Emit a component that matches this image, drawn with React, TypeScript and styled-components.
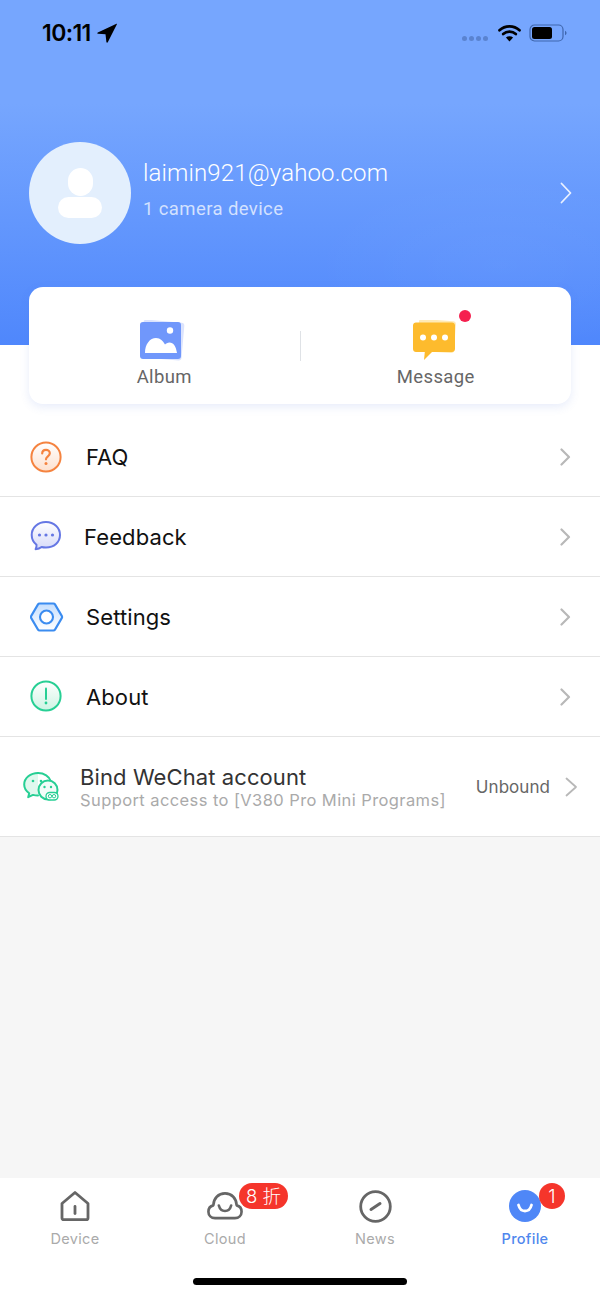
import React from 'react';
import styled, { createGlobalStyle } from 'styled-components';

const GlobalStyle = createGlobalStyle`
  html, body {
    margin: 0;
    padding: 0;
    background: #fff;
  }
  body {
    font-family: 'Inter', 'Liberation Sans', 'Noto Sans CJK SC', sans-serif;
  }
  * {
    box-sizing: border-box;
  }
`;

const Page = styled.div`
  width: 600px;
  height: 1299px;
  display: flex;
  flex-direction: column;
  overflow: hidden;
  background: #fff;
`;

const Hero = styled.div`
  height: 345px;
  flex-shrink: 0;
  background:
    radial-gradient(ellipse 190px 90px at 500px 265px, rgba(255, 255, 255, 0.035), transparent),
    linear-gradient(180deg, #76a6fe 0%, #76a6fe 30%, #4f87fc 100%);
`;

const StatusBar = styled.div`
  height: 66px;
  display: flex;
  align-items: center;
  padding: 0 33px 0 42px;
  color: #000;
`;

const Time = styled.span`
  font-size: 23px;
  font-weight: 600;
  letter-spacing: -0.6px;
  margin-right: 6px;
`;

const StatusRight = styled.div`
  margin-left: auto;
  display: flex;
  align-items: center;
`;

const SignalDots = styled.div`
  display: flex;
  gap: 2px;
  margin: 11px 10px 0 0;
`;

const SignalDot = styled.span`
  width: 5px;
  height: 5px;
  border-radius: 50%;
  background: #5a83d0;
`;

const Profile = styled.div`
  display: flex;
  align-items: center;
  margin-top: 76px;
  padding: 0 28px 0 29px;
`;

const Avatar = styled.div`
  width: 102px;
  height: 102px;
  border-radius: 50%;
  background: #e3effd;
  display: flex;
  align-items: center;
  justify-content: center;
  flex-shrink: 0;
`;

const ProfileText = styled.div`
  margin-left: 12px;
  flex: 1;
  color: #fff;
  padding-bottom: 8px;
`;

const Email = styled.div`
  font-family: 'Roboto', sans-serif;
  font-size: 24px;
  font-weight: 300;
  line-height: 30px;
  color: #fff;
  letter-spacing: 0.14px;
`;

const DeviceCount = styled.div`
  font-family: 'Roboto', sans-serif;
  font-size: 18.5px;
  line-height: 24px;
  margin-top: 9px;
  color: rgba(255, 255, 255, 0.72);
  letter-spacing: 0.4px;
`;

const QuickCard = styled.div`
  height: 117px;
  flex-shrink: 0;
  margin: -58px 29px 13px;
  background: #fff;
  border-radius: 14px;
  box-shadow: 0 3px 10px rgba(70, 110, 220, 0.13);
  display: flex;
  align-items: center;
  position: relative;
`;

const QuickItem = styled.div`
  flex: 1;
  height: 100%;
  display: flex;
  flex-direction: column;
  align-items: center;
  padding-top: 33px;
`;

const QuickIconWrap = styled.div<{ $nudge: number }>`
  position: relative;
  width: 46px;
  height: 42px;
  margin-left: ${props => props.$nudge}px;
`;

const RedDot = styled.span`
  position: absolute;
  top: -10px;
  right: -12px;
  width: 12px;
  height: 12px;
  border-radius: 50%;
  background: #f5204f;
`;

const QuickLabel = styled.div`
  font-family: 'Roboto', sans-serif;
  font-size: 18.5px;
  line-height: 22px;
  color: #666;
  margin-top: 4px;
  letter-spacing: 0.35px;
`;

const QuickDivider = styled.div`
  width: 1px;
  height: 30px;
  background: #dfe2e6;
  flex-shrink: 0;
`;

const MenuRow = styled.div<{ $tall?: boolean }>`
  height: ${props => (props.$tall ? 100 : 80)}px;
  flex-shrink: 0;
  display: flex;
  align-items: center;
  border-bottom: 1px solid #e4e4e4;
  padding-left: 30px;
`;

const MenuIcon = styled.div`
  width: 56px;
  display: flex;
  align-items: center;
  flex-shrink: 0;
`;

const MenuLabel = styled.div<{ $shift?: number }>`
  flex: 1;
  font-size: 22px;
  color: #111;
  margin-left: ${props => props.$shift || 0}px;
  letter-spacing: 0.1px;
`;

const Chevron = styled.svg`
  margin-right: 29px;
  flex-shrink: 0;
`;

const WeChatIcon = styled.div`
  width: 57px;
  margin-left: -7px;
  flex-shrink: 0;
  display: flex;
  align-items: center;
`;

const WeChatText = styled.div`
  flex: 1;
`;

const WeChatTitle = styled.div`
  font-size: 22px;
  line-height: 26px;
  color: #333;
  letter-spacing: 0.1px;
`;

const WeChatSub = styled.div`
  font-size: 16.5px;
  line-height: 20px;
  color: #aaa;
  letter-spacing: 0.41px;
`;

const BindState = styled.div`
  font-size: 17px;
  color: #666;
  margin-right: 15px;
  letter-spacing: 0.05px;
`;

const WeChatChevron = styled.svg`
  margin-right: 22px;
  flex-shrink: 0;
`;

const Filler = styled.div`
  flex: 1;
  background: #f6f6f6;
`;

const TabBar = styled.div`
  height: 121px;
  flex-shrink: 0;
  background: #fff;
  display: flex;
  flex-direction: column;
`;

const Tabs = styled.div`
  display: grid;
  grid-template-columns: repeat(4, 1fr);
  padding-top: 10px;
`;

const Tab = styled.div`
  display: flex;
  flex-direction: column;
  align-items: center;
`;

const TabIcon = styled.div`
  position: relative;
  width: 36px;
  height: 36px;
  display: flex;
  align-items: center;
  justify-content: center;
`;

const TabLabel = styled.div<{ $active?: boolean }>`
  font-size: 14.5px;
  line-height: 18px;
  margin-top: 6px;
  font-weight: ${props => (props.$active ? 500 : 400)};
  color: ${props => (props.$active ? '#4f87ee' : '#aaa')};
  letter-spacing: 0.3px;
`;

const Badge = styled.span<{ $wide?: boolean }>`
  position: absolute;
  top: -5px;
  left: 32px;
  width: ${props => (props.$wide ? 49 : 26)}px;
  height: 26px;
  border-radius: 13px;
  background: #f5352b;
  color: #fff;
  font-size: 18.5px;
  font-weight: 300;
  line-height: 26px;
  text-align: center;
  font-family: 'Inter', 'Noto Sans CJK SC', sans-serif;
  white-space: nowrap;
`;

const HomeIndicator = styled.div`
  width: 214px;
  height: 7px;
  border-radius: 4px;
  background: #000;
  margin: 30px auto 0;
`;

const RowChevron = () => (
  <Chevron width="11" height="18" viewBox="0 0 11 18" fill="none">
    <path d="M1.500 1.500L9 9L1.500 16.500" stroke="#b8b8b8" strokeWidth="2.200" strokeLinecap="round" strokeLinejoin="round" />
  </Chevron>
);

const menuItems = [
  {
    label: 'FAQ',
    icon: (
      <svg width="33" height="33" viewBox="0 0 33 33" fill="none">
        <defs>
          <linearGradient id="faqFill" x1="0" y1="0" x2="0" y2="1">
            <stop offset="0" stopColor="#fff" />
            <stop offset="1" stopColor="#fde0ce" />
          </linearGradient>
        </defs>
        <circle cx="16" cy="17" r="14.600" fill="url(#faqFill)" stroke="#f5833f" strokeWidth="2" />
        <path d="M12.200 13.500c0-2.300 1.700-3.600 3.800-3.600s3.800 1.400 3.800 3.400c0 3-3.800 3-3.800 6" stroke="#f5833f" strokeWidth="2.200" strokeLinecap="round" />
        <circle cx="16" cy="23.600" r="1.500" fill="#f5833f" />
      </svg>
    ),
  },
  {
    label: 'Feedback',
    shift: -2,
    icon: (
      <svg width="33" height="33" viewBox="0 0 33 33" fill="none">
        <defs>
          <linearGradient id="fbFill" x1="0" y1="0" x2="0" y2="1">
            <stop offset="0" stopColor="#fff" />
            <stop offset="1" stopColor="#d6daf9" />
          </linearGradient>
        </defs>
        <path
          d="M16 2C7.900 2 1.700 7.600 1.700 15c0 4 1.800 7.400 4.800 9.800.2 1.400-.2 3-.9 4.400 2.600-.2 4.500-1 6-2.200 1.300.4 2.800.5 4.400.5 8 0 14-5.300 14-12.500S24 2 16 2z"
          fill="url(#fbFill)"
          stroke="#6577e4"
          strokeWidth="2"
          strokeLinejoin="round"
        />
        <circle cx="9.500" cy="15" r="1.600" fill="#6577e4" />
        <circle cx="16" cy="15" r="1.600" fill="#6577e4" />
        <circle cx="22.500" cy="15" r="1.600" fill="#6577e4" />
      </svg>
    ),
  },
  {
    label: 'Settings',
    icon: (
      <svg width="34" height="30" viewBox="0 0 34 30" fill="none">
        <defs>
          <linearGradient id="setFill" x1="0" y1="0" x2="0" y2="1">
            <stop offset="0" stopColor="#c4defe" />
            <stop offset="1" stopColor="#fff" />
          </linearGradient>
        </defs>
        <path
          d="M9.600 1.500h13.800c.7 0 1.300.4 1.600.9l6.900 11.700c.3.600.3 1.200 0 1.800L25 27.600c-.3.500-.9.900-1.600.9H9.600c-.7 0-1.300-.4-1.600-.9L1.100 15.900c-.3-.6-.3-1.200 0-1.800L8 2.400c.3-.5.900-.9 1.600-.9z"
          fill="url(#setFill)"
          stroke="#3b8cf0"
          strokeWidth="2.100"
        />
        <circle cx="16.500" cy="15" r="6.500" fill="#fff" stroke="#3b8cf0" strokeWidth="2.100" />
      </svg>
    ),
  },
  {
    label: 'About',
    icon: (
      <svg width="33" height="33" viewBox="0 0 33 33" fill="none">
        <defs>
          <linearGradient id="aboutFill" x1="0" y1="0" x2="0" y2="1">
            <stop offset="0" stopColor="#fff" />
            <stop offset="1" stopColor="#cdf4e3" />
          </linearGradient>
        </defs>
        <circle cx="16" cy="16" r="14.600" fill="url(#aboutFill)" stroke="#27cf94" strokeWidth="2" />
        <path d="M16 8.500V19" stroke="#27cf94" strokeWidth="2" strokeLinecap="round" />
        <circle cx="16" cy="23" r="1.400" fill="#27cf94" />
      </svg>
    ),
  },
];

const App: React.FC = () => {
  return (
    <Page>
      <GlobalStyle />
      <Hero>
        <StatusBar>
          <Time>10:11</Time>
          <svg width="20" height="20" viewBox="0 0 20 20">
            <path d="M19.500.8L.8 9.500c-.7.400-.5 1.300.3 1.300l7.400.4.900 7.800c.1.800 1 .9 1.400.2L19.900 1.200c.2-.3-.1-.6-.4-.4z" fill="#000" />
          </svg>
          <StatusRight>
            <SignalDots>
              <SignalDot />
              <SignalDot />
              <SignalDot />
              <SignalDot />
            </SignalDots>
            <svg width="23" height="18" viewBox="0 0 23 18" fill="none">
              <path d="M1.500 6.200C7 1 16 1 21.500 6.200" stroke="#000" strokeWidth="2.700" strokeLinecap="round" />
              <path d="M5.200 10C8.700 6.800 14.300 6.800 17.800 10" stroke="#000" strokeWidth="2.700" strokeLinecap="round" />
              <path d="M11.500 17.500L7.900 13.400c2-1.500 5.200-1.500 7.200 0z" fill="#000" />
            </svg>
            <svg width="38" height="18" viewBox="0 0 38 18" fill="none" style={{ marginLeft: 8 }}>
              <rect x="1" y="1" width="33" height="16" rx="4.500" stroke="#3f66ad" strokeWidth="1.200" />
              <rect x="3" y="3" width="20" height="12" rx="2.500" fill="#000" />
              <path d="M36 6.800c1 .5 1.500 1.300 1.500 2.200s-.5 1.700-1.500 2.200z" fill="#3f66ad" />
            </svg>
          </StatusRight>
        </StatusBar>
        <Profile>
          <Avatar>
            <svg width="46" height="50" viewBox="0 0 46 50">
              <rect x="11" y="0" width="25" height="28" rx="12.500" fill="#fff" />
              <rect x="1" y="29" width="44" height="21" rx="10.500" fill="#fff" />
            </svg>
          </Avatar>
          <ProfileText>
            <Email>laimin921@yahoo.com</Email>
            <DeviceCount>1 camera device</DeviceCount>
          </ProfileText>
          <svg width="12" height="22" viewBox="0 0 12 22" fill="none">
            <path d="M1.500 1.500L10.500 11L1.500 20.500" stroke="#e9f0ff" strokeWidth="1.800" strokeLinecap="round" strokeLinejoin="round" />
          </svg>
        </Profile>
      </Hero>

      <QuickCard>
        <QuickItem>
          <QuickIconWrap $nudge={-4}>
            <svg width="46" height="42" viewBox="0 0 46 42">
              <rect x="3" y="1" width="41" height="38" rx="3" fill="#dbe3fd" transform="rotate(5 23 20)" />
              <rect x="1" y="2" width="41" height="37" rx="3" fill="#7097fb" />
              <circle cx="31" cy="10.500" r="3.200" fill="#fff" />
              <path d="M6 33c0-9 5-15 11-15 4.500 0 7 3 9 6.500 1-1 2.500-2 4.500-2 4 0 6.500 4 7.500 10.500z" fill="#fff" />
            </svg>
          </QuickIconWrap>
          <QuickLabel>Album</QuickLabel>
        </QuickItem>
        <QuickDivider />
        <QuickItem>
          <QuickIconWrap $nudge={0}>
            <svg width="46" height="42" viewBox="0 0 46 42">
              <rect x="5" y="0" width="37" height="32" rx="3" fill="#ffeab5" transform="rotate(4 23 16)" />
              <path d="M3 2.500h36c1.600 0 3 1.300 3 3V29c0 1.700-1.400 3-3 3H19l-8 8 .8-8H3c-1.600 0-3-1.300-3-3V5.500c0-1.700 1.400-3 3-3z" fill="#fdbb2d" />
              <circle cx="10" cy="17.500" r="3" fill="#fff" />
              <circle cx="21" cy="17.500" r="3" fill="#fff" />
              <circle cx="32" cy="17.500" r="3" fill="#fff" />
            </svg>
            <RedDot />
          </QuickIconWrap>
          <QuickLabel>Message</QuickLabel>
        </QuickItem>
      </QuickCard>

      {menuItems.map(item => (
        <MenuRow key={item.label}>
          <MenuIcon>{item.icon}</MenuIcon>
          <MenuLabel $shift={item.shift}>{item.label}</MenuLabel>
          <RowChevron />
        </MenuRow>
      ))}

      <MenuRow $tall>
        <WeChatIcon>
          <svg width="36" height="30" viewBox="0 0 36 30" fill="none">
            <path
              d="M15 1C7.500 1 1.200 6 1.200 12.500c0 3.600 2 6.600 5 8.700l-1 4 4.800-2.300c1.500.4 3 .6 5 .6"
              fill="#e0f8ee"
              stroke="#27cf94"
              strokeWidth="2"
              strokeLinejoin="round"
              strokeLinecap="round"
            />
            <path d="M15 1c6 0 11.500 3.300 13 8.500" stroke="#27cf94" strokeWidth="2" strokeLinecap="round" />
            <circle cx="25" cy="18" r="9.500" fill="#f2fcf8" stroke="#27cf94" strokeWidth="2" />
            <circle cx="10" cy="9" r="1.300" fill="#27cf94" />
            <circle cx="18" cy="9" r="1.300" fill="#27cf94" />
            <circle cx="21.500" cy="15" r="1.200" fill="#27cf94" />
            <circle cx="28" cy="15" r="1.200" fill="#27cf94" />
            <rect x="23" y="20.500" width="12" height="7.500" rx="3.700" fill="#fff" stroke="#27cf94" strokeWidth="1.300" />
            <circle cx="27" cy="24.200" r="1.700" stroke="#27cf94" strokeWidth="1" />
            <circle cx="31" cy="24.200" r="1.700" stroke="#27cf94" strokeWidth="1" />
          </svg>
        </WeChatIcon>
        <WeChatText>
          <WeChatTitle>Bind WeChat account</WeChatTitle>
          <WeChatSub>Support access to [V380 Pro Mini Programs]</WeChatSub>
        </WeChatText>
        <BindState>Unbound</BindState>
        <WeChatChevron width="13" height="20" viewBox="0 0 13 20" fill="none">
          <path d="M1.500 1.500L11 10L1.500 18.500" stroke="#b8b8b8" strokeWidth="1.800" strokeLinecap="round" strokeLinejoin="round" />
        </WeChatChevron>
      </MenuRow>

      <Filler />

      <TabBar>
        <Tabs>
          <Tab>
            <TabIcon>
              <svg width="32" height="32" viewBox="0 0 32 32" fill="none">
                <path
                  d="M3 13.500L16 2.500l13 11V28c0 1-.7 1.700-1.700 1.700H4.700C3.700 29.700 3 29 3 28z"
                  stroke="#666"
                  strokeWidth="2.800"
                  strokeLinejoin="round"
                />
                <path d="M16 16.500v7" stroke="#666" strokeWidth="2.800" strokeLinecap="round" />
              </svg>
            </TabIcon>
            <TabLabel>Device</TabLabel>
          </Tab>
          <Tab>
            <TabIcon>
              <svg width="38" height="30" viewBox="0 0 38 30" fill="none">
                <path
                  d="M8.500 27.800c-4 0-7-2.900-7-6.800 0-3.300 2.200-6 5.200-6.700C6.900 7 12 1.700 19 1.700s12.100 5.300 12.300 12.600c3 .7 5.200 3.400 5.200 6.700 0 3.900-3 6.800-7 6.800z"
                  stroke="#666"
                  strokeWidth="2.800"
                  strokeLinejoin="round"
                />
                <path d="M12.500 14.500c1 3.800 3.500 5.800 6.500 5.800s5.500-2 6.500-5.800" stroke="#666" strokeWidth="2.800" strokeLinecap="round" />
              </svg>
              <Badge $wide>8 折</Badge>
            </TabIcon>
            <TabLabel>Cloud</TabLabel>
          </Tab>
          <Tab>
            <TabIcon>
              <svg width="33" height="33" viewBox="0 0 33 33" fill="none">
                <circle cx="16.500" cy="16.500" r="14.800" stroke="#666" strokeWidth="2.800" />
                <path d="M12 19.500L21 13.500" stroke="#666" strokeWidth="3" strokeLinecap="round" />
              </svg>
            </TabIcon>
            <TabLabel>News</TabLabel>
          </Tab>
          <Tab>
            <TabIcon>
              <svg width="32" height="32" viewBox="0 0 32 32" fill="none">
                <circle cx="16" cy="16" r="16" fill="#4f87f7" />
                <path d="M9.500 15c1 4 3.600 6 6.500 6s5.500-2 6.500-6" stroke="#fff" strokeWidth="2.800" strokeLinecap="round" />
              </svg>
              <Badge>1</Badge>
            </TabIcon>
            <TabLabel $active>Profile</TabLabel>
          </Tab>
        </Tabs>
        <HomeIndicator />
      </TabBar>
    </Page>
  );
};

export default App;
